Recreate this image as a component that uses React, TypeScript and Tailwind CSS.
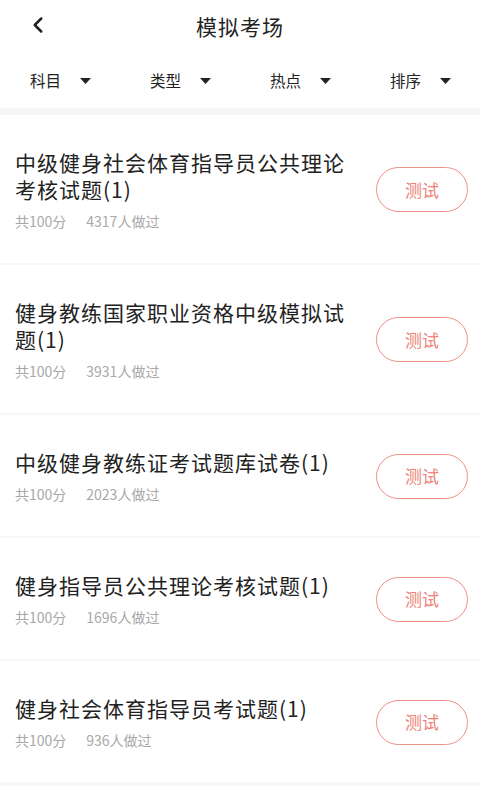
import { ChevronLeft } from "lucide-react";

const filters = ["科目", "类型", "热点", "排序"];

const exams = [
  { title: "中级健身社会体育指导员公共理论考核试题(1)", total: "共100分", done: "4317人做过" },
  { title: "健身教练国家职业资格中级模拟试题(1)", total: "共100分", done: "3931人做过" },
  { title: "中级健身教练证考试题库试卷(1)", total: "共100分", done: "2023人做过" },
  { title: "健身指导员公共理论考核试题(1)", total: "共100分", done: "1696人做过" },
  { title: "健身社会体育指导员考试题(1)", total: "共100分", done: "936人做过" },
];

export default function App() {
  return (
    <main
      className="min-h-screen w-[480px] bg-white text-[#222]"
      style={{ fontFamily: '"Noto Sans CJK SC", "Noto Sans", sans-serif' }}
    >
      {/* header */}
      <div className="relative flex h-[54px] items-center justify-center">
        <button className="absolute left-[25px] top-[12px] text-[#222]">
          <ChevronLeft className="h-[26px] w-[26px]" strokeWidth={2.3} />
        </button>
        <h1 className="text-[21px] tracking-[1px]">模拟考场</h1>
      </div>

      {/* filters */}
      <div className="grid h-[54px] grid-cols-4 items-center">
        {filters.map((f) => (
          <div key={f} className="flex items-center pl-[30px]">
            <span className="text-[15.5px]">{f}</span>
            <svg className="ml-[19px] h-[6px] w-[11px]" viewBox="0 0 11 6">
              <path d="M0 0h11L5.5 6z" fill="#222" />
            </svg>
          </div>
        ))}
      </div>

      <div className="h-[7px] bg-[#f6f6f6]" />

      {/* list */}
      <div className="flex flex-col gap-[2px] bg-[#f7f7f7] pb-[4px]">
        {exams.map((e) => (
          <div key={e.title} className="flex items-center bg-white pt-[34px] pb-[33px] pl-[15px] pr-[12px]">
            <div className="flex-1 pr-[19px]">
              <p className="text-[21px] leading-[27px] tracking-[1px]">{e.title}</p>
              <p className="mt-[9px] flex gap-[20px] text-[14px] leading-[18px] text-[#a8a8a8]">
                <span>{e.total}</span>
                <span>{e.done}</span>
              </p>
            </div>
            <button className="h-[45px] w-[92px] shrink-0 rounded-full border border-[#ee8f86] text-[17px] text-[#ec8378]">
              测试
            </button>
          </div>
        ))}
      </div>
    </main>
  );
}
